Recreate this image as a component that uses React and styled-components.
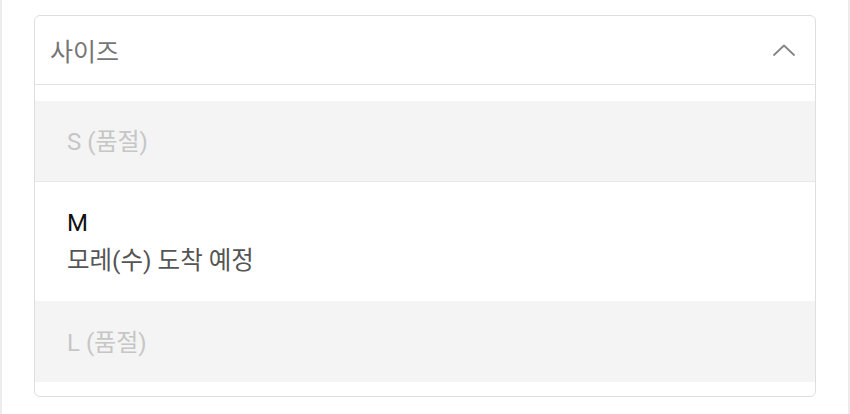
import React from "react";
import styled, { createGlobalStyle } from "styled-components";

const GlobalStyle = createGlobalStyle`
  html, body {
    margin: 0;
    padding: 0;
    background: #ffffff;
  }
  body {
    font-family: Roboto, "Noto Sans CJK KR", sans-serif;
    -webkit-font-smoothing: antialiased;
  }
`;

const Page = styled.div`
  box-sizing: border-box;
  width: 850px;
  height: 414px;
  padding: 15px 32px 0;
  border-left: 2px solid #ececec;
  border-right: 2px solid #ececec;
  background: #ffffff;
`;

const Select = styled.div`
  border: 1px solid #dedede;
  border-radius: 6px;
  overflow: hidden;
  background: #ffffff;
`;

const Trigger = styled.div`
  display: flex;
  align-items: center;
  justify-content: space-between;
  height: 68px;
  padding: 0 20px 0 15px;
  border-bottom: 1px solid #e3e3e3;
  color: #767676;
  font-size: 25px;
`;

const Chevron = styled.svg`
  width: 22px;
  height: 12px;
  display: block;
`;

const List = styled.ul`
  list-style: none;
  margin: 0;
  padding: 16px 0 14px;
`;

const Option = styled.li`
  display: flex;
  flex-direction: column;
  justify-content: ${({ $tall }) => ($tall ? "flex-start" : "center")};
  box-sizing: border-box;
  padding: ${({ $tall }) => ($tall ? "26px 32px 0" : "2px 32px 0")};
  height: ${({ $tall }) => ($tall ? "119px" : "81px")};
  background: ${({ $soldOut }) => ($soldOut ? "#f4f4f4" : "#ffffff")};
  border-bottom: ${({ $divider }) => ($divider ? "1px solid #e8e8e8" : "none")};
  color: ${({ $soldOut }) => ($soldOut ? "#c6c6c6" : "#111111")};
  font-size: 24px;
  line-height: 30px;
`;

const OptionName = styled.span`
  font-size: 24px;
  line-height: 30px;
  color: #111111;
`;

const OptionNote = styled.span`
  margin-top: 8px;
  font-size: 24.5px;
  line-height: 30px;
  color: #555555;
`;

const options = [
  { label: "S (품절)", soldOut: true },
  { label: "M", note: "모레(수) 도착 예정" },
  { label: "L (품절)", soldOut: true },
];

export default function App() {
  return (
    <>
      <GlobalStyle />
      <Page>
        <Select>
          <Trigger>
            <span>사이즈</span>
            <Chevron viewBox="0 0 22 12" fill="none">
              <polyline
                points="1,11 11,1.5 21,11"
                stroke="#858585"
                strokeWidth="1.8"
                strokeLinecap="round"
                strokeLinejoin="round"
              />
            </Chevron>
          </Trigger>
          <List>
            {options.map((opt, i) => (
              <Option
                key={opt.label}
                $soldOut={opt.soldOut}
                $tall={!!opt.note}
                $divider={i === 0}
              >
                {opt.note ? (
                  <>
                    <OptionName>{opt.label}</OptionName>
                    <OptionNote>{opt.note}</OptionNote>
                  </>
                ) : (
                  opt.label
                )}
              </Option>
            ))}
          </List>
        </Select>
      </Page>
    </>
  );
}
